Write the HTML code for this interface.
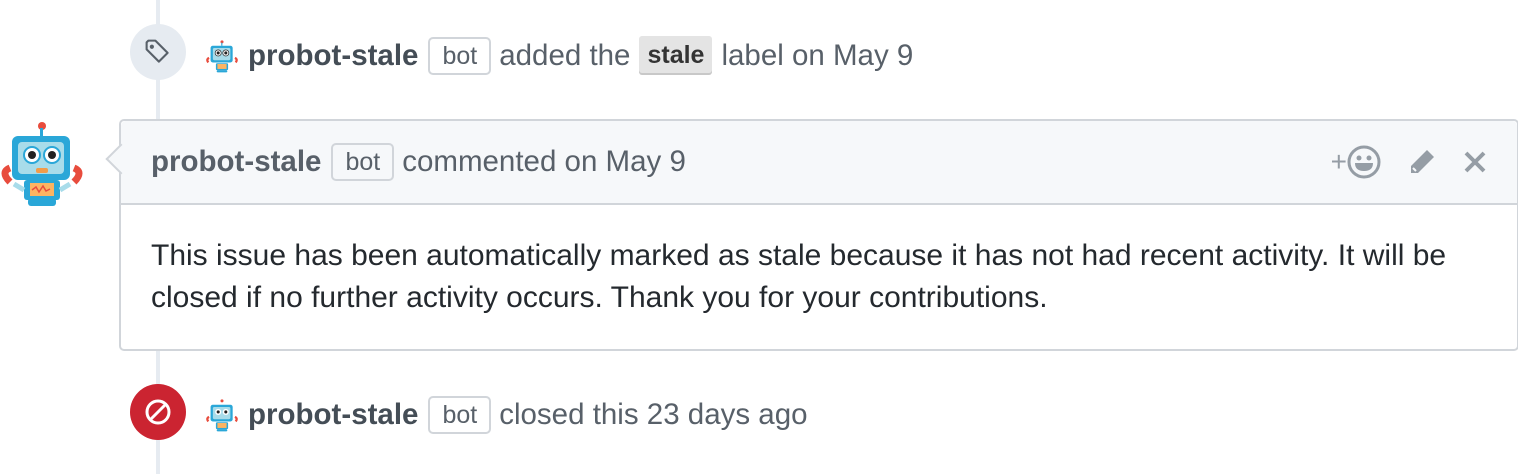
<!DOCTYPE html><html><head><style>
body{margin:0;width:1518px;height:474px;background:#fff;font-family:"Liberation Sans",Helvetica,Arial,sans-serif;color:#586069;position:relative;overflow:hidden}
.line{position:absolute;left:156px;top:0;width:4px;height:474px;background:#e6ebf1}
.badge{position:absolute;width:56px;height:56px;border-radius:50%;display:flex;align-items:center;justify-content:center}
.row{position:absolute;left:206px;font-size:29.5px;display:flex;align-items:center;white-space:nowrap}
.row b{color:#444d56;margin:0 10px 0 10px}
.bot{border:2px solid #d1d5da;border-radius:5px;padding:3px 12px;font-size:25px;color:#586069;margin-right:8px;line-height:28px}
.lbl{background:#e4e4e4;color:#333;font-weight:bold;font-size:25px;padding:5px 8px;border-radius:3px;margin:0 9px;box-shadow:inset 0 -2px 0 rgba(0,0,0,.12)}
.box{position:absolute;left:119px;top:119px;width:1396px;height:228px;border:2px solid #d1d5da;border-radius:5px;background:#fff}
.hdr{height:82px;background:#f6f8fa;border-bottom:2px solid #d1d5da;border-radius:5px 5px 0 0;display:flex;align-items:center;padding-left:30px;font-size:29.5px}
.body{padding:30px 30px;font-size:30px;line-height:42px;color:#24292e}
.arrow{position:absolute;left:110px;top:148px;width:20px;height:20px;background:#f6f8fa;border-left:2px solid #d1d5da;border-bottom:2px solid #d1d5da;transform:rotate(45deg)}
</style></head><body>
<div class="line"></div>
<div class="badge" style="left:130px;top:24px;background:#e6ebf1">
<svg width="28" height="28" viewBox="0 0 16 16"><path d="M1.5 2.5v4l7 7 5-5-7-7h-4z" fill="none" stroke="#586069" stroke-width="1.2" stroke-linejoin="round"/><circle cx="4.5" cy="5" r="1.2" fill="#586069"/></svg></div>
<div class="row" style="top:36px">
<svg width="32" height="34" viewBox="0 0 84 86"><rect x="12" y="16" width="58" height="44" rx="6" fill="#2aa7d8"/><rect x="18" y="22" width="46" height="32" rx="4" fill="#a8dcea"/><circle cx="32" cy="35" r="8" fill="#fff" stroke="#333" stroke-width="2"/><circle cx="52" cy="35" r="8" fill="#fff" stroke="#333" stroke-width="2"/><circle cx="32" cy="35" r="4" fill="#222"/><circle cx="52" cy="35" r="4" fill="#222"/><circle cx="42" cy="6" r="4" fill="#e84c3d"/><rect x="40" y="8" width="3" height="8" fill="#2aa7d8"/><rect x="26" y="62" width="32" height="18" rx="3" fill="#2aa7d8"/><rect x="30" y="64" width="24" height="13" fill="#fdb462"/><path d="M6 60 Q0 52 8 48" stroke="#e84c3d" stroke-width="6" fill="none"/><path d="M78 60 Q84 52 76 48" stroke="#e84c3d" stroke-width="6" fill="none"/><rect x="28" y="80" width="28" height="6" rx="3" fill="#2aa7d8"/></svg>
<b>probot-stale</b><span class="bot">bot</span>added the<span class="lbl">stale</span>label on May 9</div>
<div style="position:absolute;left:0;top:120px">
<svg width="84" height="86" viewBox="0 0 84 86"><rect x="12" y="16" width="58" height="44" rx="6" fill="#2aa7d8"/><rect x="18" y="22" width="46" height="32" rx="4" fill="#a8dcea"/><circle cx="32" cy="35" r="8" fill="#fff" stroke="#2aa7d8" stroke-width="2"/><circle cx="52" cy="35" r="8" fill="#fff" stroke="#2aa7d8" stroke-width="2"/><circle cx="32" cy="35" r="4" fill="#222"/><circle cx="52" cy="35" r="4" fill="#222"/><rect x="36" y="48" width="12" height="5" rx="2" fill="#f39c4a"/><circle cx="42" cy="6" r="4" fill="#e84c3d"/><rect x="40" y="8" width="3" height="8" fill="#2aa7d8"/><rect x="24" y="60" width="36" height="20" rx="3" fill="#2aa7d8"/><rect x="30" y="63" width="24" height="13" fill="#fdb462"/><path d="M32 70l4-3 3 5 4-6 3 5 4-2" stroke="#e84c3d" stroke-width="1.5" fill="none"/><path d="M10 62 Q0 52 10 48" stroke="#e84c3d" stroke-width="7" fill="none"/><path d="M74 62 Q84 52 74 48" stroke="#e84c3d" stroke-width="7" fill="none"/><path d="M14 64 L24 70M70 64 L60 70" stroke="#a8dcea" stroke-width="5"/><rect x="28" y="78" width="28" height="8" rx="3" fill="#2aa7d8"/></svg></div>
<div class="box"><div class="hdr"><b style="color:#586069;margin-right:10px">probot-stale</b><span class="bot">bot</span>commented on May 9
<div style="margin-left:auto;margin-right:30px;display:flex;align-items:center;gap:26px;color:#959da5">
<span style="display:flex;align-items:center;font-size:28px">+<svg width="34" height="34" viewBox="0 0 34 34"><circle cx="17" cy="17" r="15" fill="none" stroke="#959da5" stroke-width="3"/><circle cx="12" cy="13" r="2.5" fill="#959da5"/><circle cx="22" cy="13" r="2.5" fill="#959da5"/><path d="M8 18h18q0 8-9 8t-9-8z" fill="#959da5"/></svg></span>
<svg width="30" height="30" viewBox="0 0 30 30"><path d="M20 3l7 7-16 16H4v-7z" fill="#959da5"/><path d="M6 21l3 3" stroke="#f6f8fa" stroke-width="2"/></svg>
<svg width="24" height="24" viewBox="0 0 24 24"><path d="M3 3l18 18M21 3L3 21" stroke="#959da5" stroke-width="4"/></svg></div></div>
<div class="body">This issue has been automatically marked as stale because it has not had recent activity. It will be closed if no further activity occurs. Thank you for your contributions.</div></div>
<div class="arrow"></div>
<div class="badge" style="left:130px;top:384px;background:#cb2431">
<svg width="28" height="28" viewBox="0 0 28 28"><circle cx="14" cy="14" r="11" fill="none" stroke="#fff" stroke-width="3"/><path d="M7 21L21 7" stroke="#fff" stroke-width="3"/></svg></div>
<div class="row" style="top:396px">
<svg width="32" height="34" viewBox="0 0 84 86"><rect x="12" y="16" width="58" height="44" rx="6" fill="#2aa7d8"/><rect x="18" y="22" width="46" height="32" rx="4" fill="#a8dcea"/><circle cx="32" cy="35" r="8" fill="#fff"/><circle cx="52" cy="35" r="8" fill="#fff"/><circle cx="32" cy="35" r="4" fill="#222"/><circle cx="52" cy="35" r="4" fill="#222"/><circle cx="42" cy="6" r="4" fill="#e84c3d"/><rect x="26" y="62" width="32" height="18" rx="3" fill="#2aa7d8"/><rect x="30" y="64" width="24" height="13" fill="#fdb462"/><path d="M6 60 Q0 52 8 48" stroke="#e84c3d" stroke-width="6" fill="none"/><path d="M78 60 Q84 52 76 48" stroke="#e84c3d" stroke-width="6" fill="none"/><rect x="28" y="80" width="28" height="6" rx="3" fill="#2aa7d8"/></svg>
<b>probot-stale</b><span class="bot">bot</span>closed this 23 days ago</div>
</body></html>
